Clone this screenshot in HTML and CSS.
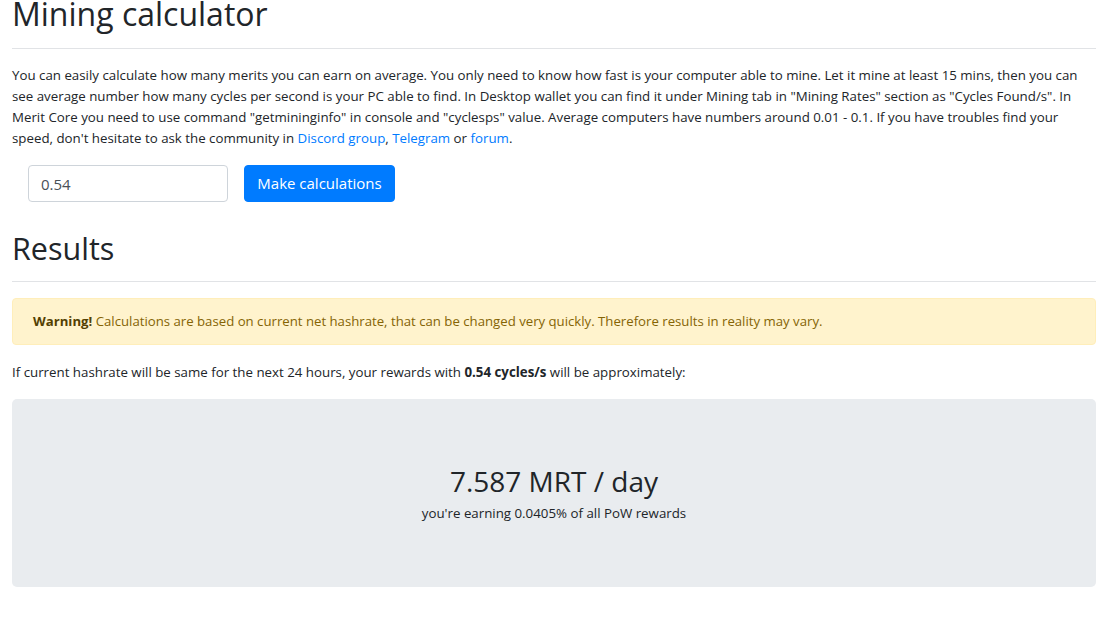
FILE: index.html
```html
<!DOCTYPE html>
<html lang="en">
<head>
  <meta charset="UTF-8">
  <title>Mining calculator</title>
  <link rel="stylesheet" href="styles.css">
</head>
<body>

  <div class="page">
    <!-- Calculator -->
    <h1 class="title">Mining calculator</h1>
    <hr>
    <p class="intro">
      You can easily calculate how many merits you can earn on average. You only need to know how fast is your computer able to mine. Let it mine at least 15 mins, then you can see average number how many cycles per second is your PC able to find. In Desktop wallet you can find it under Mining tab in "Mining Rates" section as "Cycles Found/s". In Merit Core you need to use command "getmininginfo" in console and "cyclesps" value. Average computers have numbers around 0.01 - 0.1. If you have troubles find your speed, don't hesitate to ask the community in <a href="#">Discord group</a>, <a href="#">Telegram</a> or <a href="#">forum</a>.
    </p>

    <form class="calc-form" onsubmit="return false;">
      <input type="text" id="cycles-input" value="0.54">
      <button type="submit" id="calc-button">Make calculations</button>
    </form>

    <!-- Results -->
    <h2 class="subtitle">Results</h2>
    <hr>
    <div class="alert">
      <strong>Warning!</strong> Calculations are based on current net hashrate, that can be changed very quickly. Therefore results in reality may vary.
    </div>
    <p class="summary">If current hashrate will be same for the next 24 hours, your rewards with <strong>0.54 cycles/s</strong> will be approximately:</p>

    <div class="result-box">
      <div class="result-value">7.587 MRT / day</div>
      <div class="result-share">you're earning 0.0405% of all PoW rewards</div>
    </div>
  </div>

</body>
</html>
```

FILE: styles.css
```css
body {
  margin: 0;
  padding: 0;
  background: #fff;
  color: #212529;
  font-family: "Segoe UI", "Open Sans", Arial, sans-serif;
  font-size: 13.3px;
  line-height: 21px;
}

.page {
  padding: 0 2px 0 12px;
}

a {
  color: #007bff;
  text-decoration: none;
}

hr {
  border: 0;
  border-top: 1px solid #e1e3e6;
  margin: 0;
}

.title {
  font-size: 32px;
  font-weight: 500;
  line-height: 40px;
  margin: -6px 0 14px;
}

.intro {
  margin: 16px 0 16px;
}

.calc-form {
  display: flex;
  align-items: center;
  gap: 16px;
  padding-left: 16px;
  margin-bottom: 29px;
}

#cycles-input {
  width: 200px;
  height: 37px;
  box-sizing: border-box;
  padding: 6px 12px;
  font: inherit;
  font-size: 15px;
  color: #495057;
  border: 1px solid #ced4da;
  border-radius: 4px;
}

#calc-button {
  height: 37px;
  width: 151px;
  padding: 0;
  font: inherit;
  font-size: 15px;
  color: #fff;
  background-color: #007bff;
  border: 1px solid #007bff;
  border-radius: 4px;
  cursor: pointer;
}

.subtitle {
  font-size: 30.5px;
  font-weight: 500;
  line-height: 34px;
  margin: 0 0 16px;
}

.alert {
  margin-top: 16px;
  padding: 12px 20px;
  background-color: #fff3cd;
  border: 1px solid #ffeeba;
  border-radius: 4px;
  color: #856404;
  font-size: 13.2px;
}

.alert strong {
  color: #533f03;
}

.summary {
  margin: 17px 0 16px;
}

.result-box {
  height: 188px;
  background-color: #e9ecef;
  border-radius: 5px;
  display: flex;
  flex-direction: column;
  align-items: center;
  justify-content: center;
}

.result-value {
  font-size: 28px;
  font-weight: 500;
  line-height: 32px;
  margin-top: 3px;
  margin-bottom: 6px;
}

.result-share {
  font-size: 13.3px;
}
```
